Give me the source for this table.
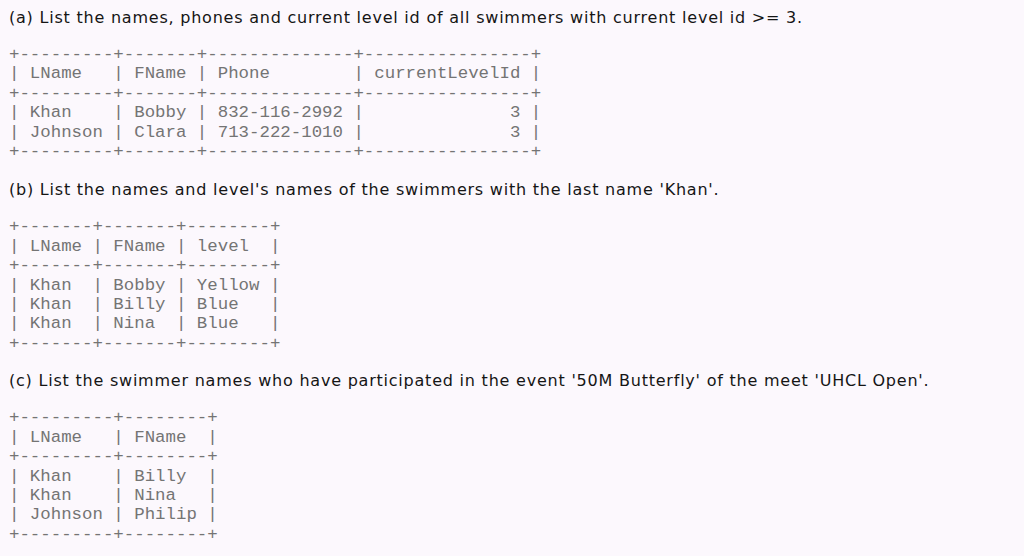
const sections = [
  {
    title:
      "(a) List the names, phones and current level id of all swimmers with current level id >= 3.",
    table: [
      "+---------+-------+--------------+----------------+",
      "| LName   | FName | Phone        | currentLevelId |",
      "+---------+-------+--------------+----------------+",
      "| Khan    | Bobby | 832-116-2992 |              3 |",
      "| Johnson | Clara | 713-222-1010 |              3 |",
      "+---------+-------+--------------+----------------+",
    ],
    top: "",
    gap: "mt-[17px]",
  },
  {
    title:
      "(b) List the names and level's names of the swimmers with the last name 'Khan'.",
    table: [
      "+-------+-------+--------+",
      "| LName | FName | level  |",
      "+-------+-------+--------+",
      "| Khan  | Bobby | Yellow |",
      "| Khan  | Billy | Blue   |",
      "| Khan  | Nina  | Blue   |",
      "+-------+-------+--------+",
    ],
    top: "mt-[19px]",
    gap: "mt-[17px]",
  },
  {
    title:
      "(c) List the swimmer names who have participated in the event '50M Butterfly' of the meet 'UHCL Open'.",
    table: [
      "+---------+--------+",
      "| LName   | FName  |",
      "+---------+--------+",
      "| Khan    | Billy  |",
      "| Khan    | Nina   |",
      "| Johnson | Philip |",
      "+---------+--------+",
    ],
    top: "mt-[18px]",
    gap: "mt-[17px]",
  },
];

export default function App() {
  return (
    <div className="w-[1024px] h-[556px] overflow-hidden bg-[#fcf8fd] pl-[9px] pt-[8px]">
      {sections.map((s, i) => (
        <div key={i} className={s.top}>
          <p className="font-['DejaVu_Sans',sans-serif] text-[16px] leading-[20px] tracking-[0.78px] text-[#151515]">
            {s.title}
          </p>
          <pre
            className={`${s.gap} font-['Courier_New','Nimbus_Mono_PS','FreeMono','Liberation_Mono',monospace] text-[17.4px] leading-[19.4px] text-[#747474]`}
          >
            {s.table.join("\n")}
          </pre>
        </div>
      ))}
    </div>
  );
}
